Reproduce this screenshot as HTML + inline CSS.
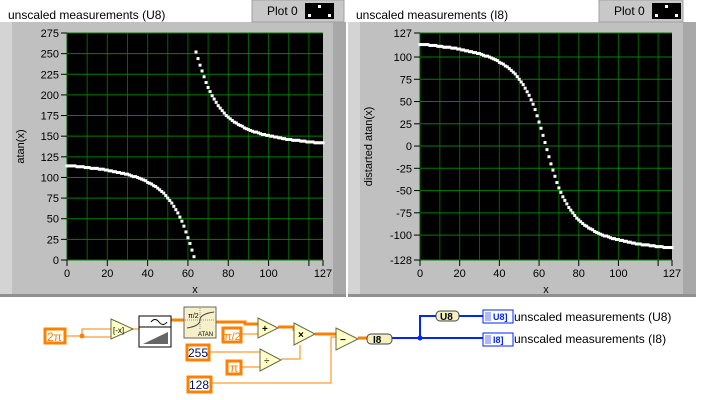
<!DOCTYPE html>
<html><head><meta charset="utf-8"><style>
body{margin:0;width:717px;height:400px;background:#fff;overflow:hidden;font-family:"Liberation Sans",sans-serif}
svg{display:block}
text{font-family:"Liberation Sans",sans-serif}
</style></head><body>
<svg id="s" width="717" height="400" xmlns="http://www.w3.org/2000/svg">
<rect width="717" height="400" fill="#fff"/>
<!-- panels -->
<rect x="0" y="22" width="346" height="275" fill="#c0c0c0"/>
<rect x="0" y="22" width="12" height="275" fill="#d4d4d4"/>
<rect x="333" y="22" width="13" height="275" fill="#a8a8a8"/>
<rect x="0" y="294" width="346" height="3" fill="#909090"/>
<rect x="348" y="22" width="348" height="275" fill="#c0c0c0"/>
<rect x="348" y="22" width="12" height="275" fill="#d4d4d4"/>
<rect x="683" y="22" width="13" height="275" fill="#a8a8a8"/>
<rect x="348" y="294" width="348" height="3" fill="#909090"/>
<!-- legends -->
<rect x="252" y="0" width="92" height="22" fill="#c8c8c8" stroke="#a0a0a0"/>
<text x="267" y="15" font-size="12">Plot 0</text>
<rect x="305" y="3" width="29" height="16" fill="#000"/>
<rect x="318" y="5" width="3" height="3" fill="#fff"/><rect x="308" y="14" width="3" height="3" fill="#fff"/><rect x="328" y="14" width="3" height="3" fill="#fff"/>
<rect x="599" y="0" width="84" height="22" fill="#c8c8c8" stroke="#a0a0a0"/>
<text x="614" y="15" font-size="12">Plot 0</text>
<rect x="652" y="3" width="29" height="16" fill="#000"/>
<rect x="665" y="5" width="3" height="3" fill="#fff"/><rect x="655" y="14" width="3" height="3" fill="#fff"/><rect x="675" y="14" width="3" height="3" fill="#fff"/>
<text x="8" y="19" font-size="12">unscaled measurements (U8)</text>
<text x="356" y="19" font-size="12">unscaled measurements (I8)</text>
<g id="g"></g>
<!-- diagram wires -->
<g fill="none" stroke="#ff8000">
<path d="M65 336H82M82 336V329H111M82 336V337H111" stroke-width="1"/>
<path d="M132 329H139" stroke-width="1"/>
<path d="M171 320H184" stroke-width="3"/>
<path d="M216 322H245V324H258M241 334H258" stroke-width="1"/>
<path d="M216 322H245V324H258" stroke-width="3"/>
<path d="M278 327H294V331" stroke-width="3"/>
<path d="M209 352H260M241 367H260M281 359H300V345" stroke-width="1"/>
<path d="M315 334H336" stroke-width="3"/>
<path d="M211 383H331V337H336" stroke-width="1"/>
<path d="M358 338H367" stroke-width="3"/>
</g>
<g fill="none" stroke="#0026ff" stroke-width="2">
<path d="M392 338H483M420 338V316H436M459 316H483"/>
</g>
<circle cx="82" cy="336" r="2.5" fill="#ff8000"/>
<circle cx="420" cy="338" r="2.5" fill="#0026ff"/>
<!-- constants -->
<g stroke="#ff8000" stroke-width="3" fill="#fff">
<rect x="45" y="329" width="20" height="14"/>
<rect x="223" y="328" width="18" height="14"/>
<rect x="187" y="345" width="22" height="15"/>
<rect x="227" y="361" width="14" height="13"/>
<rect x="188" y="377" width="23" height="15"/>
</g>
<g font-size="12">
<text x="47" y="341" fill="#ff8000">2π</text>
<text x="224" y="340" fill="#ff8000" font-size="11">π/2</text>
<text x="188" y="357" fill="#001060">255</text>
<text x="230" y="372" fill="#ff8000">π</text>
<text x="189" y="389" fill="#001060">128</text>
</g>
<!-- triangles -->
<g fill="#ffffc8" stroke="#6a6a40">
<path d="M111 319L133 329L111 339Z"/>
<path d="M258 318L278 328L258 338Z"/>
<path d="M294 323L315 334L294 345Z"/>
<path d="M260 349L281 360L260 371Z"/>
<path d="M336 328L358 339L336 350Z"/>
</g>
<g font-size="10" fill="#000">
<text x="113" y="333" font-size="8">[-x]</text>
<text x="262" y="332" font-weight="bold">+</text>
<text x="298" y="338" font-weight="bold">×</text>
<text x="264" y="364">÷</text>
<text x="340" y="343" font-weight="bold">−</text>
</g>
<rect x="139" y="316" width="32" height="31" fill="#fff" stroke="#000"/>
<path d="M139 327H171" stroke="#000"/>
<path d="M143 344L168 344L168 332Z" fill="#666"/>
<path d="M151 322q4-5 8 0t8 0" fill="none" stroke="#000"/>
<rect x="184" y="307" width="32" height="31" fill="#f5f0c8" stroke="#666"/>
<text x="188" y="318" font-size="7">π/2</text>
<text x="198" y="336" font-size="6">ATAN</text>
<path d="M200 308V330M185 320H215" stroke="#999" stroke-dasharray="1 1"/>
<path d="M187 328Q200 326 200 320T214 312" fill="none" stroke="#444"/>
<!-- converters -->
<rect x="367" y="334" width="25" height="10" rx="4" fill="#f5f0c0" stroke="#444"/>
<text x="373" y="343" font-size="10" font-weight="bold" font-family="Liberation Mono">I8</text>
<rect x="436" y="311" width="23" height="10" rx="4" fill="#f5f0c0" stroke="#444"/>
<text x="440" y="320" font-size="10" font-weight="bold" font-family="Liberation Mono">U8</text>
<g fill="#fff" stroke="#0026ff">
<rect x="483" y="310" width="30" height="13"/>
<rect x="483" y="333" width="30" height="13"/>
</g>
<rect x="485" y="312" width="6" height="9" fill="#b0b8ff"/><rect x="485" y="335" width="6" height="9" fill="#b0b8ff"/>
<text x="493" y="320" font-size="9" font-weight="bold" fill="#0026ff" font-family="Liberation Mono">U8]</text>
<text x="493" y="343" font-size="9" font-weight="bold" fill="#0026ff" font-family="Liberation Mono">I8]</text>
<text x="514" y="321" font-size="12">unscaled measurements (U8)</text>
<text x="514" y="343" font-size="12">unscaled measurements (I8)</text>
</svg>
<script>
var NS="http://www.w3.org/2000/svg",g=document.getElementById('g'),h='';
function chart(x0,x1,y0,y1,vmin,vmax,ticks,fn,lab,labx){
 h+='<rect x="'+x0+'" y="'+y0+'" width="'+(x1-x0)+'" height="'+(y1-y0)+'" fill="#000"/>';
 var sx=(x1-x0)/127,sy=(y1-y0)/(vmax-vmin);
 for(var i=0;i<=127;i+=10){var X=x0+i*sx;h+='<line x1="'+X+'" y1="'+y0+'" x2="'+X+'" y2="'+y1+'" stroke="#006400"/>';}
 for(var k=0;k<ticks.length;k++){var Y=y1-(ticks[k]-vmin)*sy;h+='<line x1="'+x0+'" y1="'+Y+'" x2="'+x1+'" y2="'+Y+'" stroke="#008000"/><line x1="'+(x0-6)+'" y1="'+Y+'" x2="'+x0+'" y2="'+Y+'" stroke="#000"/><text x="'+(x0-8)+'" y="'+(Y+4)+'" font-size="11" text-anchor="end">'+String(ticks[k]).replace('-','-')+'</text>';}
 [0,20,40,60,80,100,120,127].forEach(function(t){var X=x0+t*sx;h+='<line x1="'+X+'" y1="'+y1+'" x2="'+X+'" y2="'+(y1+6)+'" stroke="#000"/>';if(t!=120)h+='<text x="'+X+'" y="'+(y1+17)+'" font-size="11" text-anchor="middle">'+t+'</text>';});
 h+='<text x="'+((x0+x1)/2)+'" y="'+(y1+33)+'" font-size="11" text-anchor="middle">x</text>';
 var cy=(y0+y1)/2;h+='<text x="'+labx+'" y="'+cy+'" font-size="11" text-anchor="middle" transform="rotate(-90 '+labx+' '+cy+')">'+lab+'</text>';
 for(var x=0;x<=127;x++){var v=fn(x);var X=x0+x*sx,Y=y1-(v-vmin)*sy;h+='<rect x="'+(X-1.5)+'" y="'+(Y-1.5)+'" width="3" height="3" fill="#fff"/>';}
}
function i8(x){return Math.round(-127*2/Math.PI*Math.atan(0.1*(x-63.5)));}
function u8(x){var v=i8(x);return v<0?v+256:v;}
chart(67,323,33,260,0,275,[0,25,50,75,100,125,150,175,200,225,250,275],u8,'atan(x)',24);
chart(420,672,33,260,-128,127,[-128,-100,-75,-50,-25,0,25,50,75,100,127],i8,'distarted atan(x)',372);
g.innerHTML=h;
</script>
</body></html>
